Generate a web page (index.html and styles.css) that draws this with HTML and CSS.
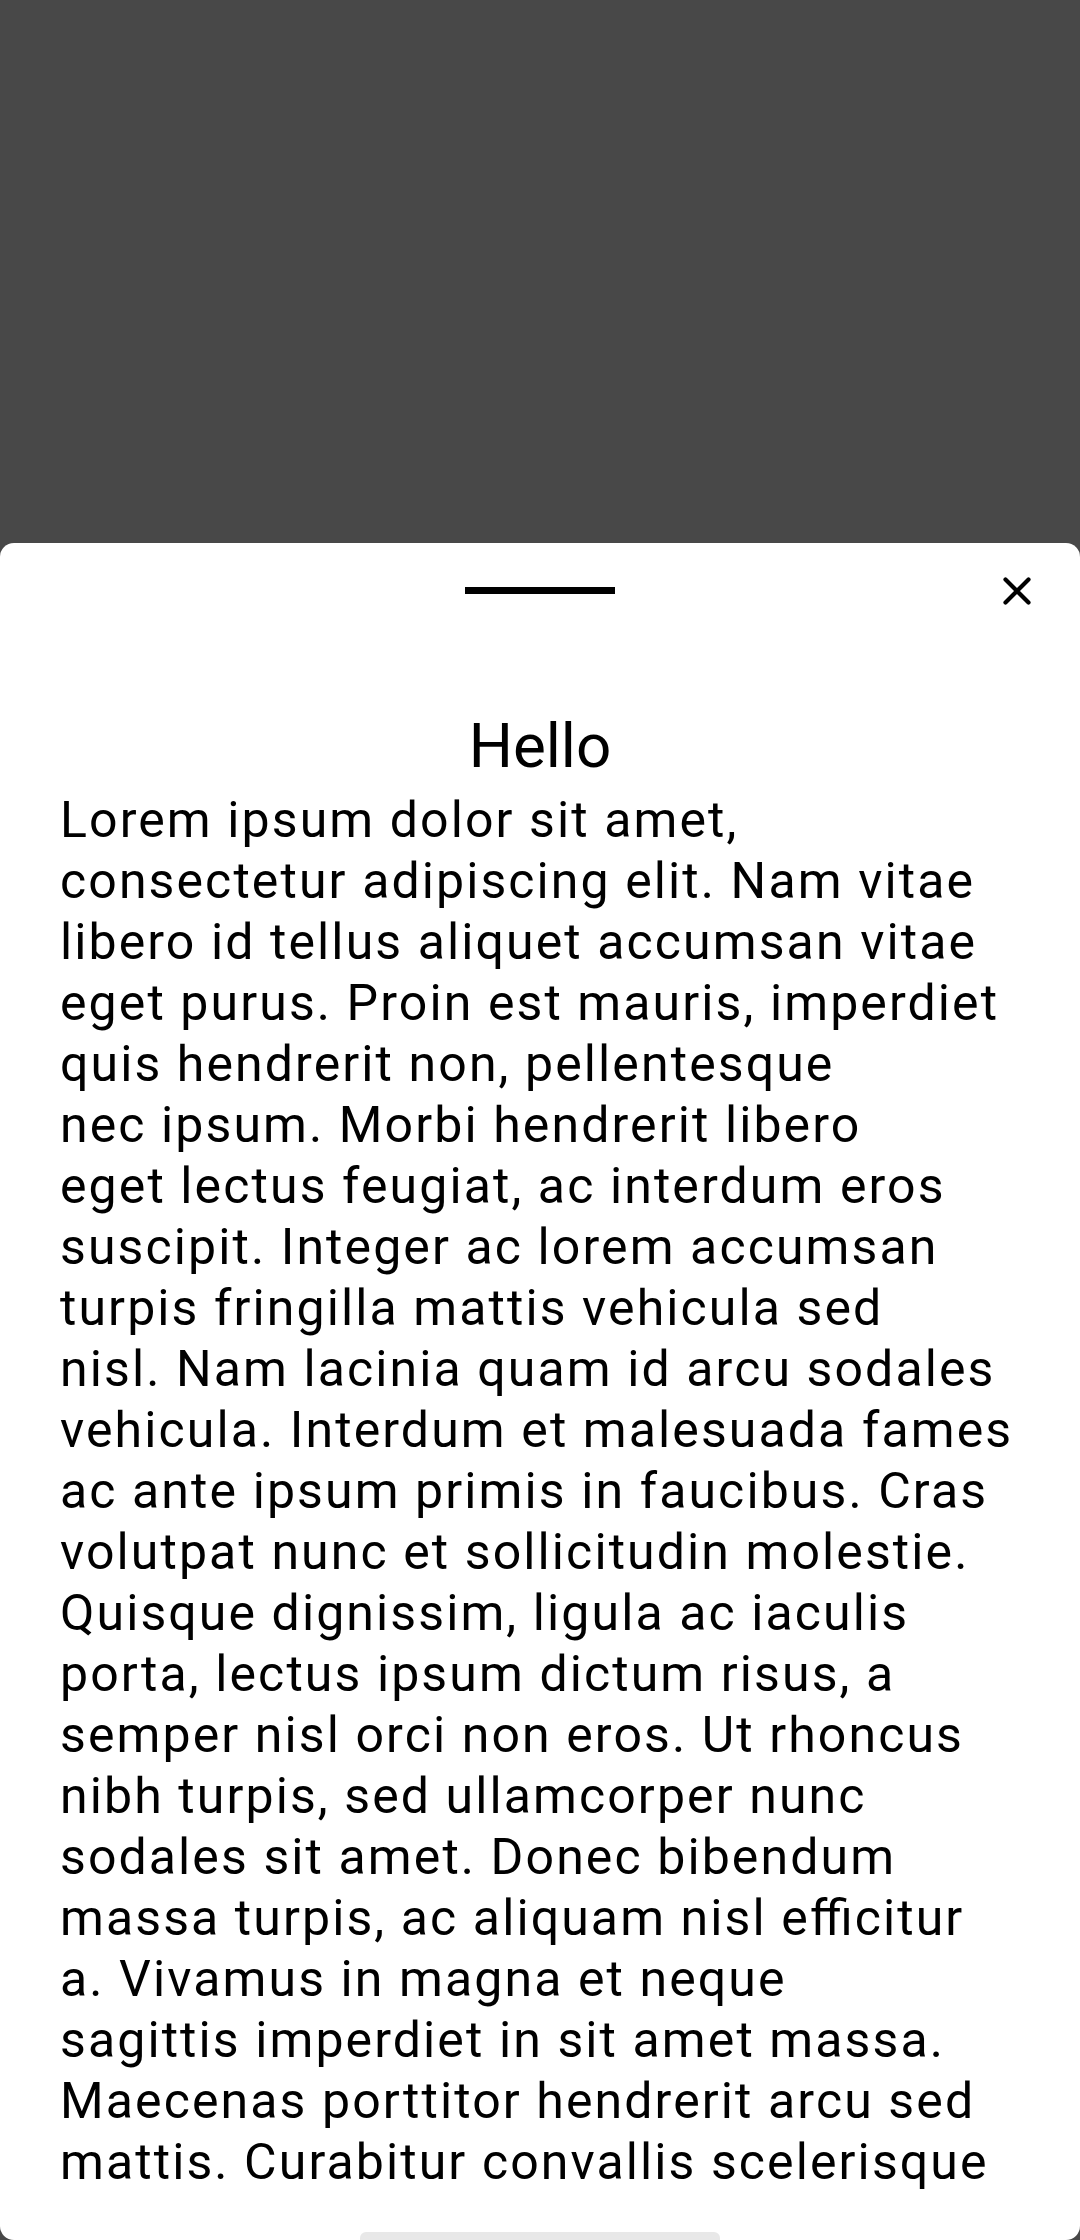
FILE: index.html
```html
<!DOCTYPE html>
<html lang="en">
<head>
<meta charset="utf-8">
<title>Bottom sheet</title>
<link rel="stylesheet" href="styles.css">
</head>
<body>
<div class="screen">
  <div class="scrim"></div>
  <section class="sheet">
    <header class="sheet-header">
      <div class="handle-cell"><div class="handle"></div></div>
      <button class="close" aria-label="Close">
        <svg width="28" height="28" viewBox="0 0 28 28"><path d="M2.5 2.5 L25.5 25.5 M25.5 2.5 L2.5 25.5" stroke="#000" stroke-width="4.2" stroke-linecap="round" fill="none"/></svg>
      </button>
    </header>
    <h1 class="title">Hello</h1>
    <p class="body-text">Lorem ipsum dolor sit amet,<br>consectetur adipiscing elit. Nam vitae<br>libero id tellus aliquet accumsan vitae<br>eget purus. Proin est mauris, imperdiet<br>quis hendrerit non, pellentesque<br>nec ipsum. Morbi hendrerit libero<br>eget lectus feugiat, ac interdum eros<br>suscipit. Integer ac lorem accumsan<br>turpis fringilla mattis vehicula sed<br>nisl. Nam lacinia quam id arcu sodales<br>vehicula. Interdum et malesuada fames<br>ac ante ipsum primis in faucibus. Cras<br>volutpat nunc et sollicitudin molestie.<br>Quisque dignissim, ligula ac iaculis<br>porta, lectus ipsum dictum risus, a<br>semper nisl orci non eros. Ut rhoncus<br>nibh turpis, sed ullamcorper nunc<br>sodales sit amet. Donec bibendum<br>massa turpis, ac aliquam nisl e<span class="lig">ffi</span>citur<br>a. Vivamus in magna et neque<br>sagittis imperdiet in sit amet massa.<br>Maecenas porttitor hendrerit arcu sed<br>mattis. Curabitur convallis scelerisque</p>
    <div class="nav-pill"></div>
  </section>
</div>
</body>
</html>
```
FILE: styles.css
```css
html, body {
  margin: 0;
  padding: 0;
}
body {
  background: #484848;
  font-family: Roboto, "Noto Sans", sans-serif;
  color: #000;
  overflow: hidden;
}
.screen {
  width: 1080px;
  height: 2240px;
  display: flex;
  flex-direction: column;
}
.scrim {
  flex: 0 0 543px;
  background: #484848;
}
.sheet {
  flex: 1;
  background: #fff;
  border-radius: 14px 14px 14px 14px;
  display: flex;
  flex-direction: column;
  overflow: hidden;
}
.sheet-header {
  display: grid;
  grid-template-columns: 1fr 150px 1fr;
  padding-top: 34px;
}
.handle-cell {
  grid-column: 2;
  padding-top: 10px;
}
.handle {
  width: 150px;
  height: 7px;
  background: #000;
}
.close {
  grid-column: 3;
  justify-self: end;
  margin-right: 49px;
  width: 28px;
  height: 28px;
  padding: 0;
  border: 0;
  background: none;
  display: block;
}
.close svg {
  display: block;
}
.title {
  margin: 103px 0 0;
  text-align: center;
  font-size: 62px;
  font-weight: 400;
  line-height: 75px;
}
.body-text {
  margin: 7px 0 0;
  padding: 0 60px;
  font-size: 50px;
  line-height: 61px;
  letter-spacing: 2.1px;
  white-space: nowrap;
}
.lig {
  letter-spacing: 0;
  font-variant-ligatures: common-ligatures;
  padding-right: 2.1px;
}
.nav-pill {
  margin: auto auto 0;
  width: 360px;
  height: 8px;
  background: #e8e8e8;
  border-radius: 6px 6px 0 0;
}
```
